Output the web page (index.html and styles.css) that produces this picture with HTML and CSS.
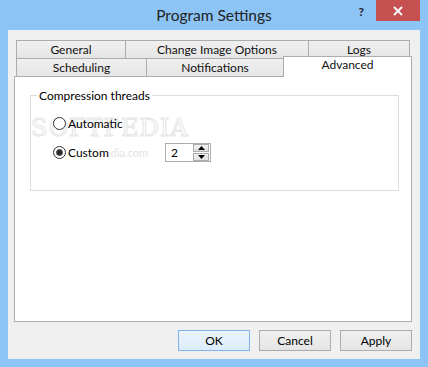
FILE: index.html
```html
<!DOCTYPE html>
<html>
<head>
<meta charset="utf-8">
<link rel="stylesheet" href="styles.css">
</head>
<body>
<div class="window">
  <div class="titlebar">
    <div class="tb-left"></div>
    <div class="title">Program Settings</div>
    <div class="tb-right">
      <span class="help">?</span>
      <span class="close">
        <svg width="10" height="10" viewBox="0 0 10 10"><path d="M1 1 L9 9 M9 1 L1 9" stroke="#fff" stroke-width="1.8" fill="none"/></svg>
      </span>
    </div>
  </div>
  <div class="client">
    <div class="tabctl">
      <div class="tabrow back">
        <div class="tab w-general">General</div>
        <div class="tab w-change">Change Image Options</div>
        <div class="tab w-logs">Logs</div>
      </div>
      <div class="tabrow front">
        <div class="tab w-sched">Scheduling</div>
        <div class="tab w-notif">Notifications</div>
        <div class="tab selected w-adv">Advanced</div>
      </div>
      <div class="panel">
        <div class="watermark">SOFTPEDIA</div>
        <fieldset class="group">
          <legend>Compression threads</legend>
          <div class="optrow first">
            <label class="radio"><span class="circle"></span><span class="rtext">Automatic</span></label>
          </div>
          <div class="optrow second">
            <label class="radio custom"><span class="circle checked"></span><span class="rtext">Custom</span><span class="wm-url">dia.com</span></label>
            <div class="spin">
              <span class="spinval">2</span>
              <div class="spinbtns">
                <span class="sbtn"><svg width="7" height="4" viewBox="0 0 7 4"><path d="M0 4 L3.5 0 L7 4 Z" fill="#000"/></svg></span>
                <span class="sbtn"><svg width="7" height="4" viewBox="0 0 7 4"><path d="M0 0 L3.5 4 L7 0 Z" fill="#000"/></svg></span>
              </div>
            </div>
          </div>
        </fieldset>
      </div>
    </div>
    <div class="buttons">
      <button class="btn default">OK</button>
      <button class="btn">Cancel</button>
      <button class="btn">Apply</button>
    </div>
  </div>
</div>
</body>
</html>
```

FILE: styles.css
```css
* { box-sizing: border-box; }
html, body { margin: 0; padding: 0; }
body {
  width: 428px;
  height: 367px;
  background: #8cc4f6;
  font-family: "Lato", "Noto Sans", sans-serif;
  font-size: 12px;
  color: #000;
  overflow: hidden;
}
.window {
  width: 428px;
  height: 367px;
  display: flex;
  flex-direction: column;
}
.titlebar {
  height: 30px;
  display: grid;
  grid-template-columns: 1fr auto 1fr;
  align-items: start;
}
.title {
  font-size: 15.5px;
  color: #222;
  line-height: 30px;
}
.tb-right {
  display: flex;
  justify-content: flex-end;
  align-items: flex-start;
  padding-right: 8px;
}
.help {
  font-weight: bold;
  font-size: 12px;
  color: #222;
  margin-top: 4px;
  margin-right: 12px;
}
.close {
  width: 44px;
  height: 21px;
  background: #c75050;
  display: flex;
  align-items: center;
  justify-content: center;
}
.client {
  margin: 0 8px 8px 8px;
  height: 329px;
  background: #f0f0f0;
  padding: 10px 8px 0 6px;
  display: flex;
  flex-direction: column;
}
.tabctl {
  display: flex;
  flex-direction: column;
}
.tabrow {
  display: flex;
  height: 18px;
  padding-left: 2px;
}
.tab {
  height: 18px;
  border: 1px solid #acacac;
  border-bottom: none;
  margin-left: -1px;
  background: linear-gradient(#f0f0f0, #e5e5e5);
  text-align: center;
  line-height: 17px;
  white-space: nowrap;
  color: #111;
}
.tab:first-child { margin-left: 0; }
.w-general { width: 110px; }
.w-change { width: 184px; }
.w-logs { width: 102px; }
.w-sched { width: 131px; }
.w-notif { width: 138px; }
.w-adv { width: 129px; }
.tab.selected {
  position: relative;
  z-index: 1;
  background: #fff;
  height: 21px;
  margin-top: -2px;
  margin-bottom: -1px;
  line-height: 16px;
  align-self: flex-start;
}
.panel {
  position: relative;
  height: 246px;
  background: #fff;
  border: 1px solid #adadad;
  padding: 11px 12px 0 15px;
}
.group {
  margin: 0;
  padding: 0;
  height: 103px;
  border: 1px solid #dcdcdc;
  position: relative;
  z-index: 1;
}
.group legend {
  margin-left: 6px;
  padding: 0 2px;
  line-height: 15px;
}
.optrow {
  display: flex;
  align-items: center;
  padding-left: 22px;
}
.optrow.first { margin-top: 12px; height: 17px; }
.optrow.second { margin-top: 10px; height: 20px; }
.radio {
  display: flex;
  align-items: center;
}
.radio.custom { width: 112px; }
.circle {
  width: 13px;
  height: 13px;
  border-radius: 50%;
  border: 1px solid #333;
  background: #fff;
  margin-right: 2px;
  flex: none;
}
.circle.checked {
  background: radial-gradient(circle, #222 0, #333 2.5px, #777 3.2px, #fff 4px);
}
.wm-url {
  color: #e2e2e2;
  font-size: 11px;
  margin-left: 2px;
}
.spin {
  width: 46px;
  height: 19px;
  border: 1px solid #acacac;
  background: #fff;
  display: flex;
  align-items: center;
  justify-content: space-between;
  padding: 0 1px 0 5px;
}
.spinval { line-height: 15px; }
.spinbtns {
  display: flex;
  flex-direction: column;
  gap: 1px;
}
.sbtn {
  width: 16px;
  height: 8px;
  border: 1px solid #acacac;
  background: linear-gradient(#f2f2f2, #e2e2e2);
  display: flex;
  align-items: center;
  justify-content: center;
}
.sbtn svg { display: block; }
.watermark {
  position: absolute;
  left: 16px;
  top: 39px;
  font-family: "DejaVu Serif", serif;
  font-size: 24px;
  line-height: 24px;
  letter-spacing: 1px;
  color: transparent;
  -webkit-text-stroke: 1px #e6e6e6;
  z-index: 0;
  pointer-events: none;
}
.buttons {
  display: flex;
  justify-content: flex-end;
  gap: 9px;
  margin-top: 8px;
}
.btn {
  width: 72px;
  height: 21px;
  border: 1px solid #acacac;
  background: linear-gradient(#f0f0f0, #e5e5e5);
  font-family: "Lato", "Noto Sans", sans-serif;
  font-size: 12px;
  color: #000;
  padding: 0;
  line-height: 18px;
}
.btn.default {
  border-color: #7eb4ea;
  background: linear-gradient(#ecf4fc, #dcecfc);
}
```
